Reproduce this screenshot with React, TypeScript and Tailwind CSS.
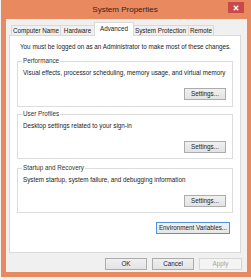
import React from "react";

const font = { fontFamily: '"Liberation Sans", Arial, sans-serif' };

function Btn({ label, w, disabled, focused }: { label: string; w: string; disabled?: boolean; focused?: boolean }) {
  const base = "h-[12px] flex items-center justify-center text-[6.3px] leading-none border ";
  const cls = disabled
    ? "border-[#d5d5d5] bg-[#f4f4f4] text-[#a3a3a3]"
    : focused
    ? "border-[#4f95dd] bg-gradient-to-b from-[#f2f2f2] to-[#e6e6e6] text-[#222]"
    : "border-[#acacac] bg-gradient-to-b from-[#f0f0f0] to-[#e3e3e3] text-[#222]";
  return <div className={base + cls + " " + w}>{label}</div>;
}

function Group({ title, text, mt, pb }: { title: string; text: string; mt: string; pb: string }) {
  return (
    <fieldset className={"mx-[7px] border border-[#dcdcdc] px-[5px] " + mt + " " + pb}>
      <legend className="ml-[-1px] px-[1px] text-[6.3px] leading-[8px] text-[#333]">{title}</legend>
      <div className="pt-[4px] text-[6.3px] leading-[8px] text-[#222]">{text}</div>
      <div className="flex justify-end pr-[1px] mt-[11px]">
        <Btn label="Settings..." w="w-[42px]" />
      </div>
    </fieldset>
  );
}

export default function App() {
  const tabs = ["Computer Name", "Hardware", "Advanced", "System Protection", "Remote"];
  const widths = ["w-[50px]", "w-[34px]", "w-[38px]", "w-[56px]", "w-[25px]"];
  return (
    <div className="w-[251px] h-[280px] bg-[#f2f2f2] pl-px overflow-hidden" style={font}>
      <div className="w-[250px] h-[277px] bg-[#e8895f] flex flex-col">
        <div className="h-[19px] flex items-start">
          <div className="flex-1 pl-[21px] text-center text-[8px] leading-[19px] text-[#2e2520]">System Properties</div>
          <div className="mt-[2px] mr-[7px] w-[16px] h-[11px] bg-[#c9484a] flex items-center justify-center">
            <svg width="6" height="6" viewBox="0 0 6 6">
              <path d="M0.8 0.8 L5.2 5.2 M5.2 0.8 L0.8 5.2" stroke="#fff" strokeWidth="1.4" />
            </svg>
          </div>
        </div>
        <div className="flex-1 ml-[5px] mr-[4px] mb-[5px] bg-[#f0f0f0] flex flex-col pt-[3px]">
          <div className="ml-[3px] mr-[6px] flex flex-col">
            <div className="flex items-end pl-[2px] -mb-px h-[14px]">
              {tabs.map((t, i) =>
                i === 2 ? (
                  <div
                    key={t}
                    className="relative z-10 h-[14px] -mx-px w-[40px] bg-white border border-b-0 border-[#d9d9d9] flex items-center justify-center text-[6.3px] text-[#222] pb-[1px]"
                  >
                    {t}
                  </div>
                ) : (
                  <div
                    key={t}
                    className={"h-[11px] bg-[#f0f0f0] border border-b-0 border-[#d9d9d9] flex items-center justify-center text-[6.3px] text-[#222] " + widths[i] + (i === 1 || i === 3 || i === 4 ? " border-l-0" : "")}
                  >
                    {t}
                  </div>
                )
              )}
            </div>
            <div className="h-[218px] bg-white border border-[#d9d9d9] flex flex-col">
              <div className="pt-[7px] pl-[10px] text-[6.3px] leading-[8px] text-[#222]">
                You must be logged on as an Administrator to make most of these changes.
              </div>
              <Group title="Performance" text="Visual effects, processor scheduling, memory usage, and virtual memory" mt="mt-[6px]" pb="pb-[6px]" />
              <Group title="User Profiles" text="Desktop settings related to your sign-in" mt="mt-[3px]" pb="pb-[5px]" />
              <Group title="Startup and Recovery" text="System startup, system failure, and debugging information" mt="mt-[5px]" pb="pb-[5px]" />
              <div className="flex justify-end pr-[10px] mt-[9px]">
                <Btn label="Environment Variables..." w="w-[74px]" focused />
              </div>
            </div>
          </div>
          <div className="flex justify-end gap-[5px] pr-[5px] mt-[5px]">
            <Btn label="OK" w="w-[42px]" />
            <Btn label="Cancel" w="w-[42px]" />
            <Btn label="Apply" w="w-[43px]" disabled />
          </div>
        </div>
      </div>
    </div>
  );
}
